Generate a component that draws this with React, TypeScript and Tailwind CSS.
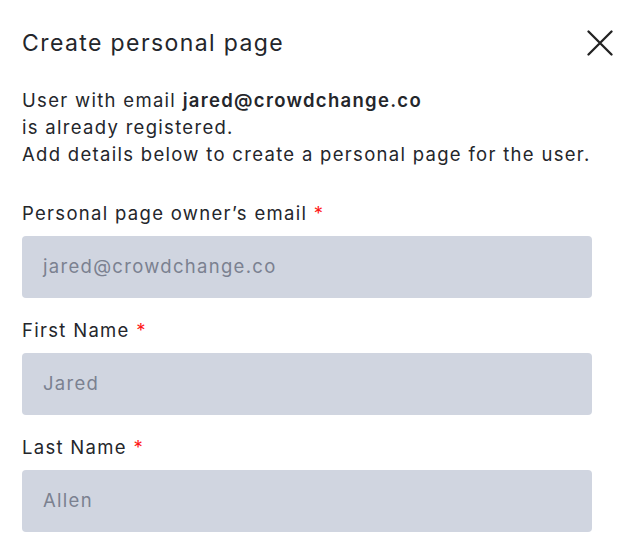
import React from 'react';

const fields = [
  { label: 'Personal page owner’s email', value: 'jared@crowdchange.co' },
  { label: 'First Name', value: 'Jared' },
  { label: 'Last Name', value: 'Allen' },
];

export default function App() {
  return (
    <div className="w-[619px] h-[545px] bg-white px-[22px] pt-[27px] text-[#24262b] font-['Inter',sans-serif]">
      <div className="flex items-center justify-between h-8">
        <h2 className="text-[23px] leading-8 font-normal tracking-[1.4px]">Create personal page</h2>
        <button className="mr-[-16px] text-[#222]" aria-label="Close">
          <svg width="26" height="26" viewBox="0 0 26 26" fill="none" stroke="currentColor" strokeWidth="2.3" strokeLinecap="round">
            <path d="M1.5 1.5L24.5 24.5M24.5 1.5L1.5 24.5" />
          </svg>
        </button>
      </div>

      <div className="mt-[28px] text-[18.5px] leading-[27px] tracking-[1.3px]">
        <p>
          User with email <span className="font-semibold">jared@crowdchange.co</span>
        </p>
        <p>is already registered.</p>
        <p>Add details below to create a personal page for the user.</p>
      </div>

      <div className="mt-[33px] flex flex-col gap-[20px]">
        {fields.map((f) => (
          <div key={f.label} className="flex flex-col gap-[11px]">
            <label className="text-[18.5px] leading-6 tracking-[1.3px]">
              {f.label} <span className="text-[#ff1a1a]">*</span>
            </label>
            <div className="h-[62px] w-[570px] rounded-[4px] bg-[#d0d5e0] flex items-center px-[21px] text-[18.5px] text-[#7b8190] tracking-[1.3px]">
              {f.value}
            </div>
          </div>
        ))}
      </div>
    </div>
  );
}
